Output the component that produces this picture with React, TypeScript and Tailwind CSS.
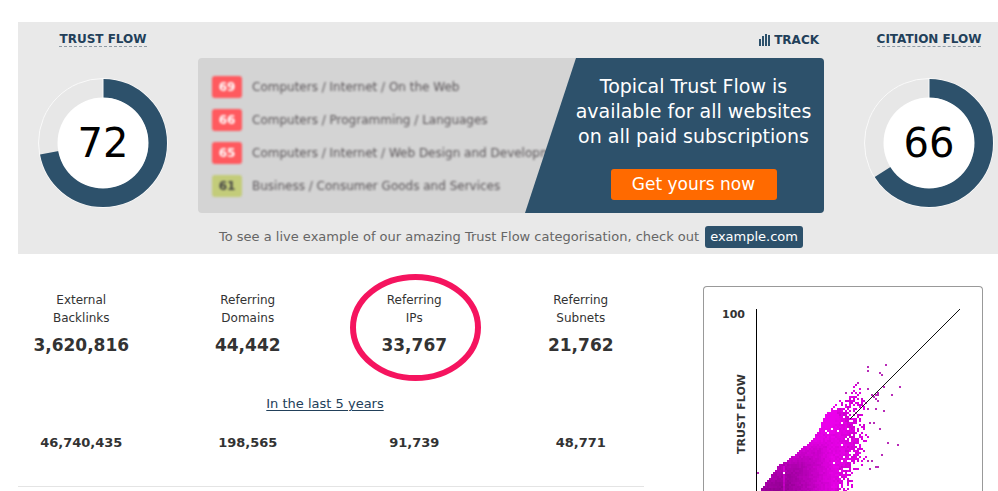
import type { ReactNode } from 'react';

interface GaugeProps {
  label: string;
  value: number;
}

interface Dot {
  col: number;
  row: number;
  fill: string;
}

const topics = [
  { score: 69, name: 'Computers / Internet / On the Web', badge: 'bg-[#ff5a5f] text-white' },
  { score: 66, name: 'Computers / Programming / Languages', badge: 'bg-[#ff5a5f] text-white' },
  { score: 65, name: 'Computers / Internet / Web Design and Development', badge: 'bg-[#ff5a5f] text-white' },
  { score: 61, name: 'Business / Consumer Goods and Services', badge: 'bg-[#c3cc7a] text-[#444]' },
];

const stats = [
  { top: 'External', bottom: 'Backlinks', value: '3,620,816', history: '46,740,435' },
  { top: 'Referring', bottom: 'Domains', value: '44,442', history: '198,565' },
  { top: 'Referring', bottom: 'IPs', value: '33,767', history: '91,739', circled: true },
  { top: 'Referring', bottom: 'Subnets', value: '21,762', history: '48,771' },
];

// row, first column, last fully covered column, last scattered column
const profile = [
  [37, 48, 48, 50],
  [41, 44, 44, 54],
  [46, 40, 40, 54],
  [51, 35, 39, 53],
  [54, 33, 43, 54],
  [60, 31, 45, 54],
  [65, 27, 44, 55],
  [70, 21, 43, 55],
  [75, 15, 42, 53],
  [77, 11, 41, 52],
  [80, 9, 40, 50],
  [85, 5, 39, 48],
  [91, 1, 37, 46],
];

const outliers = [
  [55, 28], [55, 30], [64, 27], [61, 31], [62, 32], [50, 36], [44, 41], [55, 39], [67, 42], [71, 38],
  [63, 50], [59, 49], [55, 49], [59, 42], [60, 42], [59, 44], [58, 43], [57, 42], [60, 41], [63, 38],
  [60, 45], [56, 56], [58, 56], [61, 59], [65, 66], [70, 67], [62, 72], [55, 75], [57, 75], [59, 78],
  [60, 78], [56, 79], [0, 81],
];

// Fixed seed, so that the cloud is the same on every render
function createRandom(seed: number) {
  let state = seed;
  return () => {
    state = (state * 1664525 + 1013904223) % 4294967296;
    return state / 4294967296;
  };
}

function buildDots() {
  const random = createRandom(72);
  const dots: Dot[] = outliers.map(([col, row]) => ({ col, row, fill: '#b82ab8' }));

  for (let i = 0; i < profile.length - 1; i++) {
    const from = profile[i];
    const to = profile[i + 1];
    for (let row = from[0]; row < to[0]; row++) {
      const ratio = (row - from[0]) / (to[0] - from[0]);
      const [left, solid, end] = [1, 2, 3].map((n) => Math.round(from[n] + (to[n] - from[n]) * ratio));
      for (let col = left; col <= end; col++) {
        const chance = random();
        const shade = random();
        const density = row < 50 ? 0.2 + (row - 37) * 0.03 : 1 - (col - solid) / (end - solid + 1);
        if (col > solid && chance > density) continue;
        if (col <= solid && col > 33 && chance > 0.96) continue;
        if (row < 50 && chance > density) continue;
        if (col === 13 && row === 81) continue;

        const across = Math.min(1, Math.max(0, col / 37));
        const depth = Math.min(1, (col - left) / 10);
        let level = 136 + 82 * across ** 1.4 + 28 * (1 - depth) + shade * 14 - Math.max(0, row - 72) * (1 - across);
        if (col === 13 && row > 77) level += 35;
        if (col > solid) level = 205 + shade * 25;
        const channel = Math.round(Math.min(235, level));
        dots.push({ col, row, fill: `rgb(${channel} 0 ${channel})` });
      }
    }
  }
  return dots;
}

const dots = buildDots();

function Gauge({ label, value }: GaugeProps) {
  const radius = 54.5;
  const length = 2 * Math.PI * radius;

  return (
    <div className="flex flex-col items-center pt-[10px]">
      <h2 className="border-b border-dashed border-[#8d9aa5] text-[12px] leading-[14px] font-bold whitespace-nowrap text-[#22405a]">{label}</h2>
      <svg viewBox="0 0 130 130" className="mt-[31px] size-[130px]" role="img" aria-label={`${label} ${value}`}>
        <circle cx="65" cy="65" r="64.5" fill="#e7e7e7" stroke="#fafafa" />
        <circle
          cx="65"
          cy="65"
          r={radius}
          fill="none"
          stroke="#2d516b"
          strokeWidth="19"
          strokeDasharray={`${(length * value) / 100} ${length}`}
          transform="rotate(-90 65 65)"
        />
        <path d="M65 0v20" stroke="#fafafa" />
        <circle cx="65" cy="65" r="45.5" fill="#fff" />
        <text x="65" y="79" textAnchor="middle" fontSize="40" fill="#000">{value}</text>
      </svg>
    </div>
  );
}

function TopicBanner() {
  return (
    <div className="flex overflow-hidden rounded bg-[#d4d4d4]">
      <ul className="flex min-w-0 flex-1 flex-col gap-[11px] pt-[18px] pl-[14px] whitespace-nowrap">
        {topics.map((topic) => (
          <li key={topic.score} className="flex h-[22px] items-center gap-[10px] text-[12px] text-[#5a5558] blur-[1px]">
            <span className={`flex h-[22px] w-[30px] flex-none items-center justify-center rounded-[3px] font-bold ${topic.badge}`}>{topic.score}</span>
            <span>{topic.name}</span>
          </li>
        ))}
      </ul>
      <div className="relative -ml-[51px] flex w-[299px] flex-none flex-col items-center bg-[#2d516b] pt-4 pb-[13px] pl-[38px] text-white [clip-path:polygon(51px_0,100%_0,100%_100%,0_100%)]">
        <p className="text-center text-[19px] leading-[25px]">
          Topical Trust Flow is
          <br />
          available for all websites
          <br />
          on all paid subscriptions
        </p>
        <button className="mt-5 h-[31px] w-[166px] rounded-[3px] bg-[#ff6a00] text-[17px]">Get yours now</button>
      </div>
    </div>
  );
}

function Circled({ children }: { children: ReactNode }) {
  return (
    <div className="relative">
      {children}
      <svg viewBox="0 0 132 108" className="pointer-events-none absolute -top-[18px] left-1/2 h-[108px] w-[132px] -translate-x-1/2 overflow-visible" aria-hidden="true">
        <ellipse cx="67.5" cy="54.5" rx="62.5" ry="50.5" fill="none" stroke="#f5145f" strokeWidth="6" />
      </svg>
    </div>
  );
}

function FlowChart() {
  return (
    <div className="mt-8 w-[280px] flex-none overflow-hidden rounded-t border border-b-0 border-[#999]">
      <svg width="278" height="206" viewBox="0 0 278 206" role="img" aria-label="Trust flow chart">
        <g fontSize="11" fontWeight="bold" fill="#333">
          <text x="41" y="31" textAnchor="end">100</text>
          <text transform="translate(41 127) rotate(-90)" textAnchor="middle">TRUST FLOW</text>
        </g>
        <g shapeRendering="crispEdges">
          {dots.map((dot) => (
            <rect key={`${dot.col}-${dot.row}`} x={53 + dot.col * 2} y={23 + dot.row * 2} width="2" height="2" fill={dot.fill} />
          ))}
        </g>
        <path d="M146 132L256 22" stroke="#111" fill="none" />
        <path d="M52.5 22v184" stroke="#000" fill="none" />
      </svg>
    </div>
  );
}

export default function App() {
  return (
    <div className="flex h-screen flex-col overflow-hidden bg-white pt-[22px] pl-[18px] font-['DejaVu_Sans',Verdana,sans-serif]">
      <section className="grid grid-cols-[170px_1fr_138px] bg-[#e9e9e9] pb-[6px]">
        <Gauge label="TRUST FLOW" value={72} />
        <div className="pr-[36px] pl-[10px]">
          <div className="flex h-9 items-center justify-end pr-[5px]">
            <a href="#track" className="flex items-center gap-1 text-[12px] leading-4 font-bold text-[#22405a]">
              <svg viewBox="0 0 11 12" className="h-3 w-[11px]" fill="#2d516b">
                <path d="M0 5h2v7H0zM3 2h2v10H3zM6 0h2v12H6zM9 1h2v11H9z" />
              </svg>
              TRACK
            </a>
          </div>
          <TopicBanner />
          <p className="mt-[13px] flex items-center justify-center gap-[6px] text-[13px] whitespace-nowrap text-[#666]">
            To see a live example of our amazing Trust Flow categorisation, check out
            <a href="#example" className="rounded-[3px] bg-[#2d516b] px-[5px] leading-[22px] text-white">example.com</a>
          </p>
        </div>
        <Gauge label="CITATION FLOW" value={66} />
      </section>
      <main className="flex min-h-0 flex-1 gap-[59px] pr-[15px]">
        <section className="flex-1 text-center text-[#333]">
          <div className="grid grid-cols-4 gap-x-10 pt-[37px]">
            {stats.map((stat) => {
              const content = (
                <>
                  <p className="text-[12px] leading-[18px]">{stat.top}<br />{stat.bottom}</p>
                  <p className="mt-2 text-[17px] leading-5 font-bold">{stat.value}</p>
                </>
              );
              return stat.circled ? <Circled key={stat.bottom}>{content}</Circled> : <div key={stat.bottom}>{content}</div>;
            })}
          </div>
          <p className="mt-10 pr-3 text-[13px] leading-[18px]">
            <a href="#history" className="text-[#22405a] underline underline-offset-2">In the last 5 years</a>
          </p>
          <div className="mt-5 grid grid-cols-4 gap-x-10 text-[13px] leading-5 font-bold">
            {stats.map((stat) => (
              <p key={stat.bottom}>{stat.history}</p>
            ))}
          </div>
          <hr className="mt-[33px] border-[#e4e4e4]" />
        </section>
        <FlowChart />
      </main>
    </div>
  );
}
